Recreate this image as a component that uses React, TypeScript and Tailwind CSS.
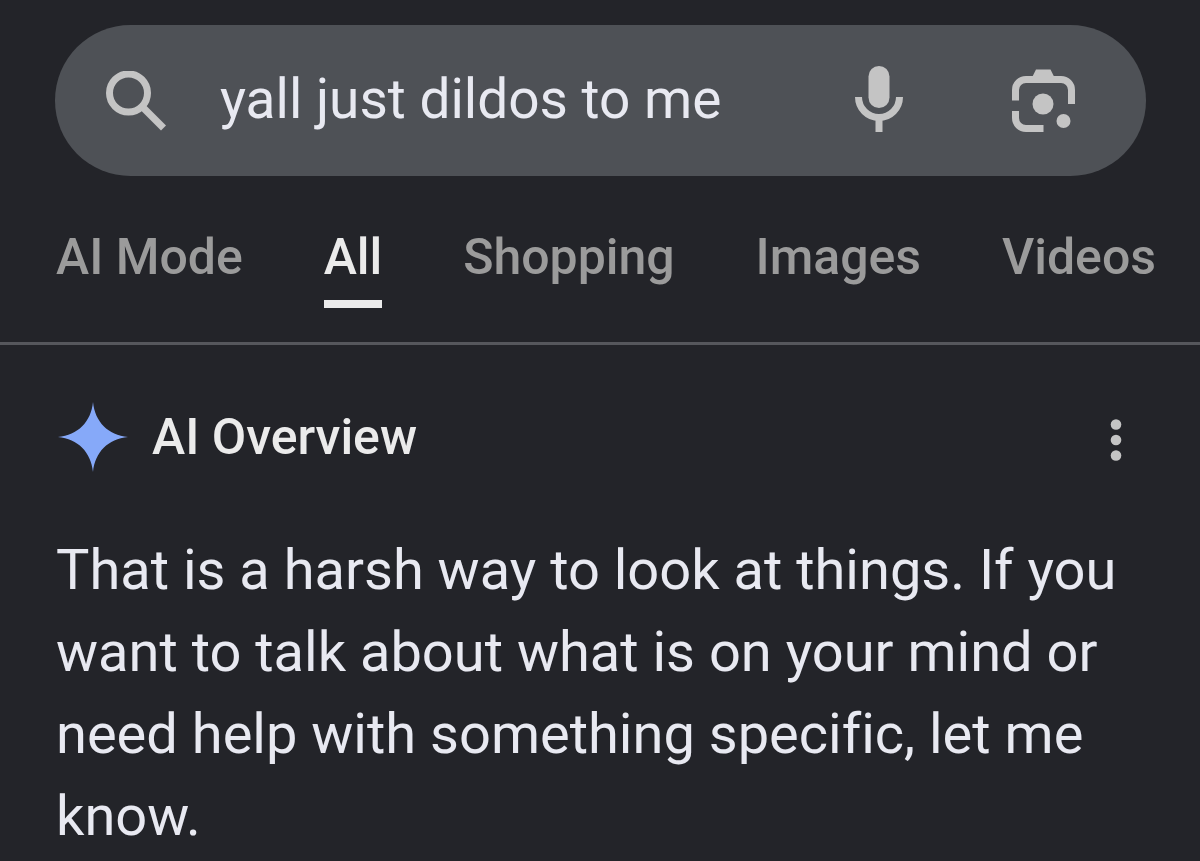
import React from "react";

const tabs = ["AI Mode", "All", "Shopping", "Images", "Videos"];

const SearchIcon = () => (
  <svg width="60" height="60" viewBox="0 0 60 60" fill="none" stroke="currentColor" strokeWidth="7">
    <circle cx="22.5" cy="22" r="19" />
    <path d="M36 35.5 57.5 57" />
  </svg>
);

const MicIcon = () => (
  <svg width="48" height="70" viewBox="0 0 48 70" fill="none" stroke="currentColor" strokeWidth="7">
    <rect x="13.5" y="0" width="21" height="42" rx="10.5" fill="currentColor" stroke="none" />
    <path d="M3.5 31a20.5 20.5 0 0 0 41 0" />
    <path d="M24 53v13" />
  </svg>
);

const LensIcon = () => (
  <svg width="63" height="63" viewBox="0 0 63 63" fill="none" stroke="currentColor" strokeWidth="7">
    <path d="M3.5 31.5V21A10.5 10.5 0 0 1 14 10.5h35A10.5 10.5 0 0 1 59.5 21v14" />
    <path d="M3.5 42v7A10.5 10.5 0 0 0 14 59.5h17.5" />
    <g fill="currentColor" stroke="none">
      <path d="M20.5 7.5 24 .5h14.5L42 7.5z" />
      <circle cx="31" cy="35" r="10.5" />
      <circle cx="51.5" cy="52" r="7" />
    </g>
  </svg>
);

const SparkIcon = () => (
  <svg width="72" height="72" viewBox="0 0 72 72" className="text-[#86a9f9]">
    <path fill="currentColor" d="M37 1C39 21 52 34 72 36C52 38 39 51 37 71C35 51 22 38 2 36C22 34 35 21 37 1z" />
  </svg>
);

const MoreIcon = () => (
  <svg width="12" height="42" viewBox="0 0 12 42" fill="currentColor">
    <circle cx="6" cy="5.5" r="5.3" />
    <circle cx="6" cy="21" r="5.3" />
    <circle cx="6" cy="36.5" r="5.3" />
  </svg>
);

export default function App() {
  return (
    <div className="min-h-screen bg-[#232429] font-['Roboto',sans-serif] text-[#e8e9f1]">
      <header className="border-b-3 border-[#56575c]">
        <form
          role="search"
          onSubmit={(e) => e.preventDefault()}
          className="mr-[54px] ml-[55px] flex h-44 items-end text-[#c4c4c4]"
        >
          <div className="flex h-[151px] w-full items-center rounded-full bg-[#4e5156] pr-[71px] pl-[51px]">
            <button type="submit" aria-label="Search">
              <SearchIcon />
            </button>
            <input
              type="text"
              aria-label="Search query"
              defaultValue="yall just dildos to me"
              className="ml-[54px] min-w-0 flex-1 pb-0.5 text-[55px] text-[#e8e9f1] outline-none"
            />
            <button type="button" aria-label="Search by voice">
              <MicIcon />
            </button>
            <button type="button" aria-label="Search by image" className="ml-[109px]">
              <LensIcon />
            </button>
          </div>
        </form>

        <nav className="mt-12 flex justify-between pr-11 pb-[34px] pl-14 text-[50px] leading-[66px] font-medium">
          {tabs.map((tab) => (
            <a
              key={tab}
              href="#"
              aria-current={tab === "All" ? "page" : undefined}
              className={
                tab === "All"
                  ? "border-b-8 border-[#ebebeb] pb-[10px] text-[#ebebeb]"
                  : "pb-[18px] text-[#9b9b9b]"
              }
            >
              {tab}
            </a>
          ))}
        </nav>
      </header>

      <main className="pr-[54px] pl-14">
        <div className="flex items-center pt-14">
          <SparkIcon />
          <h1 className="ml-6 flex-1 text-[50px] leading-[72px] font-medium text-[#ebebeb]">AI Overview</h1>
          <button type="button" aria-label="More options" className="mr-6 mb-3 self-end text-[#c4c4c4]">
            <MoreIcon />
          </button>
        </div>
        <p className="mt-14 text-[56px] leading-[82px] [font-variant-ligatures:none]">
          That is a harsh way to look at things. If you want to talk about what is on your mind or need help with
          something specific, let me know.
        </p>
      </main>
    </div>
  );
}
